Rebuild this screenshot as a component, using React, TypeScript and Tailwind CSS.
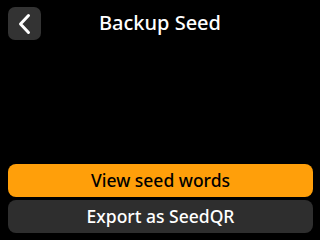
export default function App() {
  return (
    <div
      className="flex h-[240px] w-[320px] flex-col bg-black text-white"
      style={{ fontFamily: '"Noto Sans", "Open Sans", sans-serif' }}
    >
      {/* Top nav */}
      <div className="relative flex h-[47px] items-start">
        <button className="ml-2 mt-[7px] flex h-[33px] w-[33px] items-center justify-center rounded-[7px] bg-[#333333]">
          <svg width="16" height="22" viewBox="0 0 16 22" fill="none">
            <path
              d="M11.5 2.5 L3.5 11 L11.5 19.5"
              stroke="white"
              strokeWidth="3"
              strokeLinecap="round"
              strokeLinejoin="round"
            />
          </svg>
        </button>
        <h1 className="absolute left-0 right-0 top-[9px] text-center text-[20px] leading-[28px] font-medium">
          Backup Seed
        </h1>
      </div>

      <div className="flex-1" />

      {/* Buttons */}
      <div className="mb-[7px] ml-2 flex w-[305px] flex-col gap-[3px]">
        <button className="h-[33px] rounded-[8px] bg-[#ff9f0a] text-[17.5px] font-medium text-black">
          View seed words
        </button>
        <button className="h-[33px] rounded-[8px] bg-[#2e2e2e] text-[17.5px] font-medium text-white">
          Export as SeedQR
        </button>
      </div>
    </div>
  );
}
